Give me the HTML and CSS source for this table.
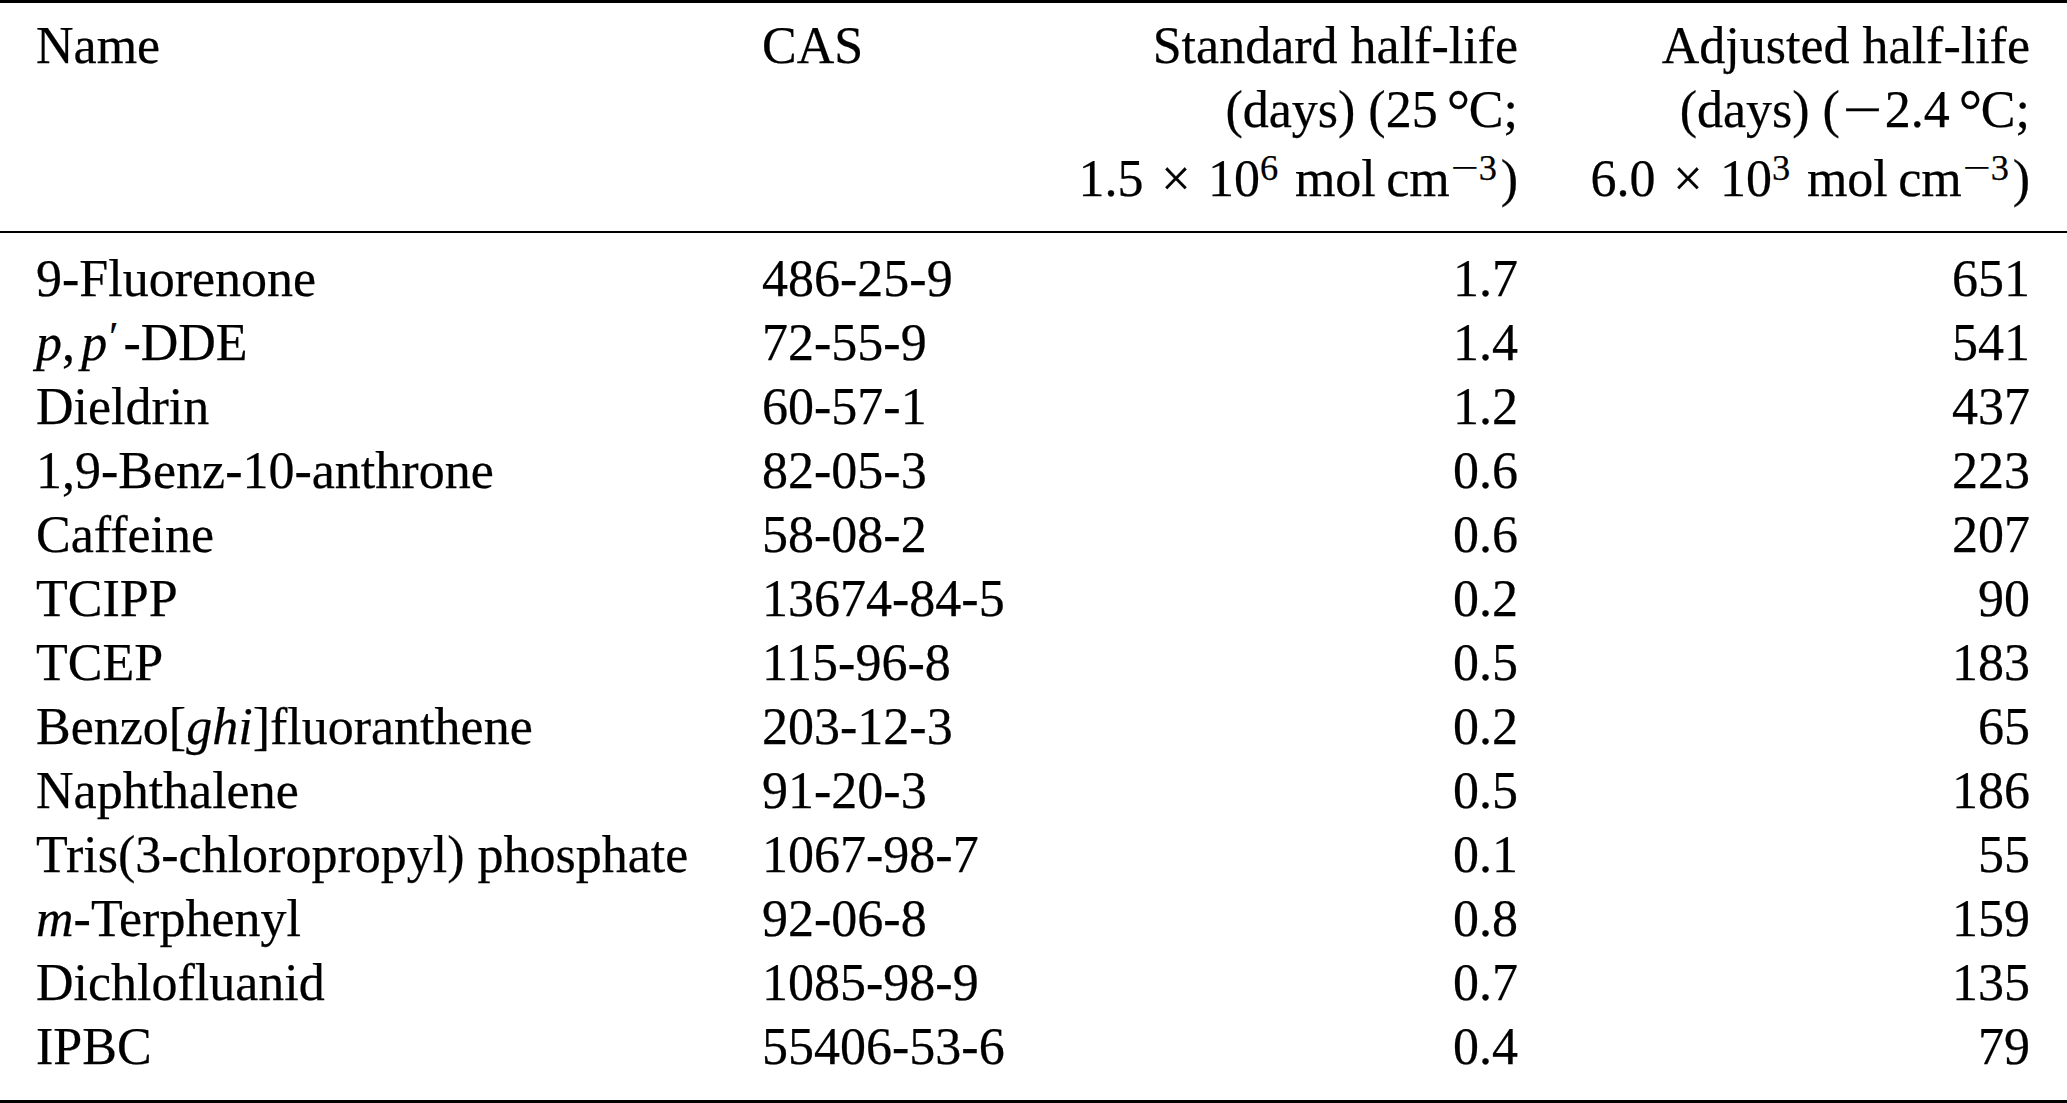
FILE: index.html
```html
<!DOCTYPE html>
<html lang="en">
<head>
<meta charset="utf-8">
<title>Half-lives</title>
<link rel="stylesheet" href="styles.css">
</head>
<body>
<table class="halflife">
  <colgroup>
    <col class="col-name">
    <col class="col-cas">
    <col class="col-std">
    <col class="col-adj">
  </colgroup>
  <thead>
    <tr>
      <th class="c-name">Name</th>
      <th class="c-cas">CAS</th>
      <th class="c-std">
        <span class="hl">Standard half-life</span>
        <span class="hl">(days) (25&#8201;<span class="deg">°</span>C;</span>
        <span class="hl hl-last">1.5 <span class="times">×</span> 10<sup class="sup">6</sup> mol&#8201;cm<sup class="sup"><span class="mminus">−</span>3</sup>)</span>
      </th>
      <th class="c-adj">
        <span class="hl">Adjusted half-life</span>
        <span class="hl">(days) (<span class="tminus">−</span>2.4&#8201;<span class="deg">°</span>C;</span>
        <span class="hl hl-last">6.0 <span class="times">×</span> 10<sup class="sup">3</sup> mol&#8201;cm<sup class="sup"><span class="mminus">−</span>3</sup>)</span>
      </th>
    </tr>
  </thead>
  <tbody>
    <tr><td class="c-name">9-Fluorenone</td><td class="c-cas">486-25-9</td><td class="c-std">1.7</td><td class="c-adj">651</td></tr>
    <tr><td class="c-name"><i>p</i>,<i class="after-comma">p</i><span class="prime">′</span>-DDE</td><td class="c-cas">72-55-9</td><td class="c-std">1.4</td><td class="c-adj">541</td></tr>
    <tr><td class="c-name">Dieldrin</td><td class="c-cas">60-57-1</td><td class="c-std">1.2</td><td class="c-adj">437</td></tr>
    <tr><td class="c-name">1,9-Benz-10-anthrone</td><td class="c-cas">82-05-3</td><td class="c-std">0.6</td><td class="c-adj">223</td></tr>
    <tr><td class="c-name">Caffeine</td><td class="c-cas">58-08-2</td><td class="c-std">0.6</td><td class="c-adj">207</td></tr>
    <tr><td class="c-name">TCIPP</td><td class="c-cas">13674-84-5</td><td class="c-std">0.2</td><td class="c-adj">90</td></tr>
    <tr><td class="c-name">TCEP</td><td class="c-cas">115-96-8</td><td class="c-std">0.5</td><td class="c-adj">183</td></tr>
    <tr><td class="c-name">Benzo[<i>ghi</i>]fluoranthene</td><td class="c-cas">203-12-3</td><td class="c-std">0.2</td><td class="c-adj">65</td></tr>
    <tr><td class="c-name">Naphthalene</td><td class="c-cas">91-20-3</td><td class="c-std">0.5</td><td class="c-adj">186</td></tr>
    <tr><td class="c-name">Tris(3-chloropropyl) phosphate</td><td class="c-cas">1067-98-7</td><td class="c-std">0.1</td><td class="c-adj">55</td></tr>
    <tr><td class="c-name"><i>m</i>-Terphenyl</td><td class="c-cas">92-06-8</td><td class="c-std">0.8</td><td class="c-adj">159</td></tr>
    <tr><td class="c-name">Dichlofluanid</td><td class="c-cas">1085-98-9</td><td class="c-std">0.7</td><td class="c-adj">135</td></tr>
    <tr><td class="c-name">IPBC</td><td class="c-cas">55406-53-6</td><td class="c-std">0.4</td><td class="c-adj">79</td></tr>
  </tbody>
</table>
</body>
</html>
```
FILE: styles.css
```css
html, body {
  margin: 0;
  padding: 0;
  background: #ffffff;
}

body {
  font-family: "Liberation Serif", "Times New Roman", serif;
  font-size: 52px;
  line-height: 64px;
  color: #000000;
  -webkit-text-stroke: 0.25px #000000;
}

.halflife {
  width: 2067px;
  table-layout: fixed;
  border-collapse: separate;
  border-spacing: 0;
}

.col-name { width: 730px; }
.col-cas  { width: 330px; }
.col-std  { width: 490px; }
.col-adj  { width: 517px; }

.halflife th,
.halflife td {
  padding: 0;
  font-weight: normal;
  vertical-align: top;
  white-space: nowrap;
}

.halflife th {
  border-top: 3px solid #000;
  border-bottom: 2px solid #000;
  padding-top: 10.5px;
  padding-bottom: 20.5px;
}

.hl {
  display: block;
}

.hl-last {
  margin-top: 5px;
}

.c-name { text-align: left; padding-left: 36px !important; }
.c-cas  { text-align: left; padding-left: 32px !important; }
.c-std  { text-align: right; padding-right: 32px !important; }
.c-adj  { text-align: right; padding-right: 37px !important; }

.halflife tbody tr:first-child td {
  padding-top: 13.5px;
}

.halflife tbody tr:last-child td {
  padding-bottom: 21.5px;
  border-bottom: 3px solid #000;
}

.sup {
  font-size: 0.7em;
  line-height: 0;
  vertical-align: 0.42em;
  margin-right: 0.1em;
}

.times {
  display: inline-block;
  width: 0.74em;
  text-align: center;
}

.mminus,
.tminus {
  display: inline-block;
  text-align: center;
  transform: scaleX(1.35);
}

.mminus { width: 0.8em; }
.tminus { width: 0.86em; }

.deg {
  display: inline-block;
  transform: scale(1.12);
  transform-origin: 50% 30%;
}

.after-comma {
  margin-left: 0.12em;
}

.prime {
  display: inline-block;
  font-size: 0.8em;
  line-height: 0;
  transform: translateY(-0.22em);
  margin-left: 0.05em;
  margin-right: 0.12em;
}
```
